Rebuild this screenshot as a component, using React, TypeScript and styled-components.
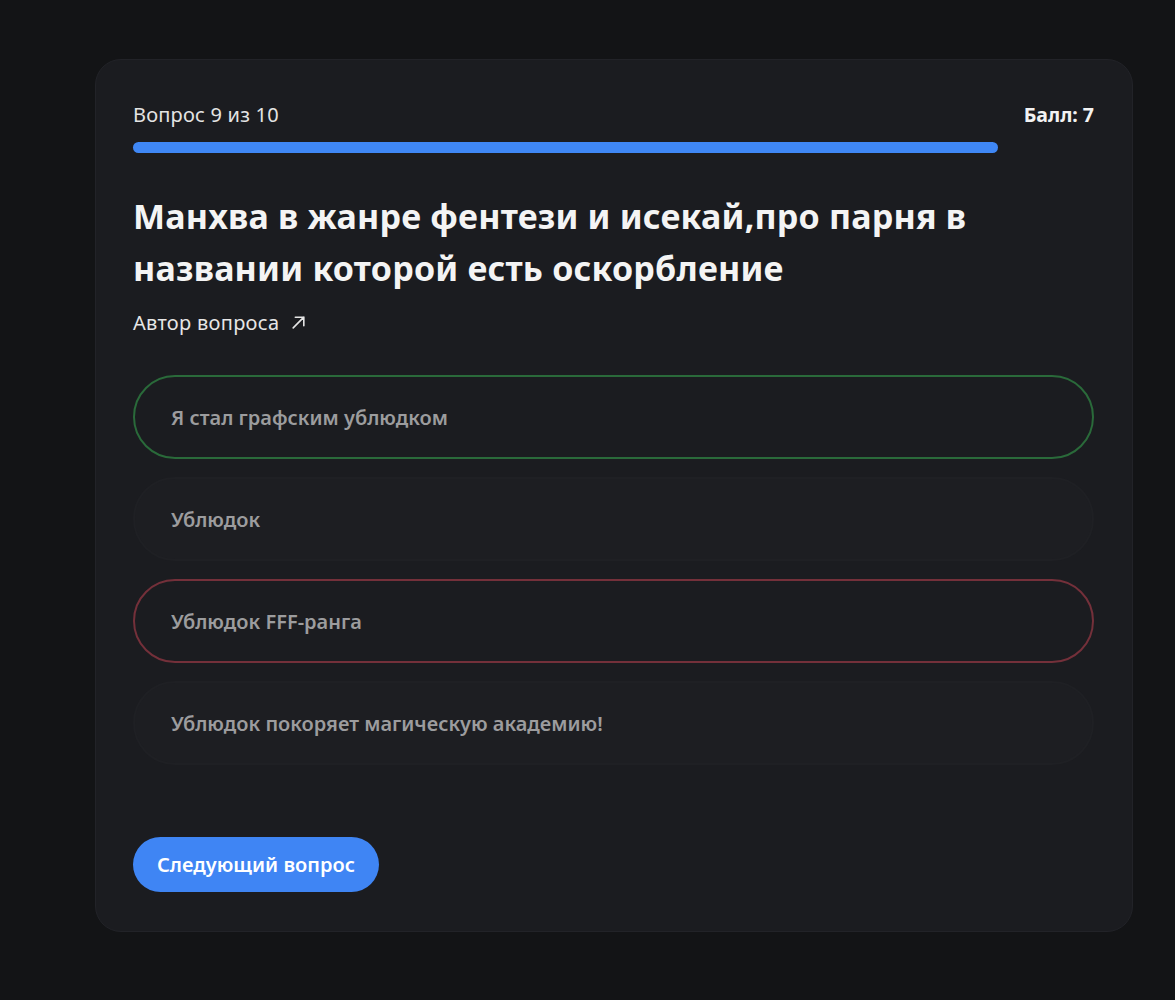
import styled, { createGlobalStyle } from "styled-components";

const GlobalStyle = createGlobalStyle`
    html, body {
        margin: 0;
        padding: 0;
        background-color: #131416;
        font-family: "Noto Sans", "Open Sans", sans-serif;
    }
`

const answers = [
    { text: "Я стал графским ублюдком", state: "correct" },
    { text: "Ублюдок", state: "idle" },
    { text: "Ублюдок FFF-ранга", state: "wrong" },
    { text: "Ублюдок покоряет магическую академию!", state: "idle" },
] as const;

type AnswerState = "correct" | "wrong" | "idle";

export default function App() {
    const current = 9;
    const total = 10;

    return (
        <>
            <GlobalStyle />
            <Page>
                <Card>
                    <TopRow>
                        <Counter>Вопрос {current} из {total}</Counter>
                        <Score>Балл: 7</Score>
                    </TopRow>
                    <ProgressTrack>
                        <ProgressFill style={{ width: `${(current / total) * 100}%` }} />
                    </ProgressTrack>
                    <Question>
                        Манхва в жанре фентези и исекай,про парня в названии которой есть оскорбление
                    </Question>
                    <AuthorLink>
                        Автор вопроса
                        <svg width="17" height="17" viewBox="0 0 16 16" fill="none">
                            <path d="M3 13L13 3M5 3h8v8" stroke="#e6e6e6" strokeWidth="1.5" strokeLinecap="round" strokeLinejoin="round" />
                        </svg>
                    </AuthorLink>
                    <Answers>
                        {answers.map(({ text, state }) =>
                            <Answer key={text} state={state}>{text}</Answer>
                        )}
                    </Answers>
                    <NextButton>Следующий вопрос</NextButton>
                </Card>
            </Page>
        </>
    )
}

const Page = styled.div`
    min-height: 1000px;
    padding: 59px 0 0 95px;
    box-sizing: border-box;
`

const Card = styled.div`
    width: 1038px;
    box-sizing: border-box;
    padding: 38px 38px 39px 37px;
    background-color: #1b1c20;
    border: 1px solid #222328;
    border-radius: 26px;
    display: flex;
    flex-direction: column;
    align-items: flex-start;
`

const TopRow = styled.div`
    width: 100%;
    display: flex;
    justify-content: space-between;
    align-items: center;
    height: 32px;
`

const Counter = styled.span`
    font-size: 20px;
    color: #e4e4e4;
    letter-spacing: 0.2px;
`

const Score = styled.span`
    font-size: 19.5px;
    font-weight: 700;
    color: #f2f2f2;
`

const ProgressTrack = styled.div`
    width: 100%;
    height: 11px;
    margin-top: 12px;
    border-radius: 6px;
    background-color: transparent;
`

const ProgressFill = styled.div`
    height: 100%;
    border-radius: 6px;
    background-color: #3f87f5;
`

const Question = styled.h2`
    margin: 37px 0 0;
    max-width: 880px;
    font-size: 34px;
    line-height: 52px;
    font-weight: 700;
    letter-spacing: 0.2px;
    color: #f4f4f4;
`

const AuthorLink = styled.a`
    margin-top: 15px;
    display: flex;
    align-items: center;
    gap: 11px;
    font-size: 20px;
    letter-spacing: 0.3px;
    color: #e6e6e6;
    cursor: pointer;
`

const borderFor = (state: AnswerState) =>
    state === "correct" ? "#2a6a3a" : state === "wrong" ? "#74303a" : "#1f2024";

const Answers = styled.div`
    width: 100%;
    margin-top: 39px;
    display: flex;
    flex-direction: column;
    gap: 18px;
`

const Answer = styled.div<{ state: AnswerState }>`
    height: 84px;
    box-sizing: border-box;
    padding: 0 36px;
    display: flex;
    align-items: center;
    border-radius: 42px;
    border: 2px solid ${props => borderFor(props.state)};
    background-color: ${props => props.state === "idle" ? "#1d1e22" : "#1b1c20"};
    font-size: 20px;
    font-weight: 600;
    color: #9c9c9e;
`

const NextButton = styled.button`
    margin-top: 72px;
    height: 55px;
    padding: 0 24px;
    border: 0;
    border-radius: 28px;
    background-color: #3f85f4;
    color: #ffffff;
    font-family: inherit;
    font-size: 20px;
    font-weight: 600;
    cursor: pointer;
`
